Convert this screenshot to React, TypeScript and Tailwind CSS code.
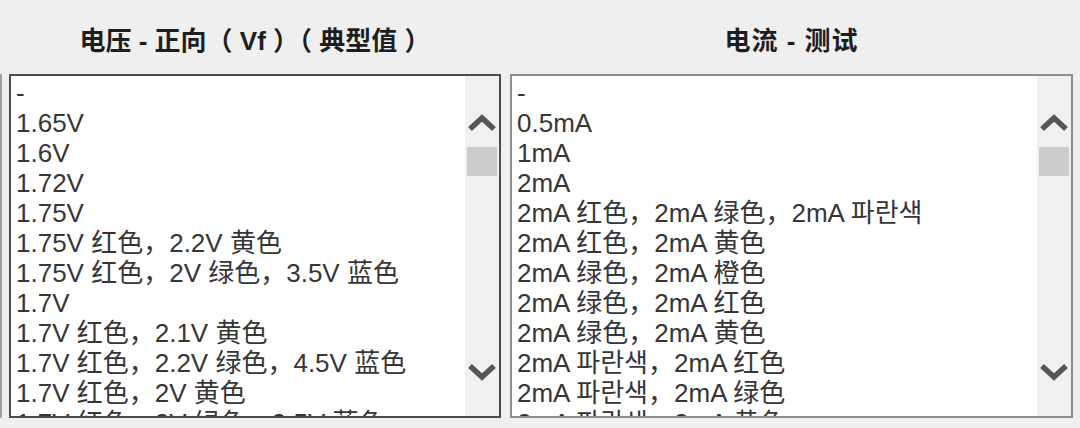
import React from "react";

const leftItems = [
  "-",
  "1.65V",
  "1.6V",
  "1.72V",
  "1.75V",
  "1.75V 红色，2.2V 黄色",
  "1.75V 红色，2V 绿色，3.5V 蓝色",
  "1.7V",
  "1.7V 红色，2.1V 黄色",
  "1.7V 红色，2.2V 绿色，4.5V 蓝色",
  "1.7V 红色，2V 黄色",
  "1.7V 红色，2V 绿色，3.5V 蓝色",
];

const rightItems = [
  "-",
  "0.5mA",
  "1mA",
  "2mA",
  "2mA 红色，2mA 绿色，2mA 파란색",
  "2mA 红色，2mA 黄色",
  "2mA 绿色，2mA 橙色",
  "2mA 绿色，2mA 红色",
  "2mA 绿色，2mA 黄色",
  "2mA 파란색，2mA 红色",
  "2mA 파란색，2mA 绿色",
  "2mA 파란색，2mA 黄色",
];

function Chevron({ up }: { up?: boolean }) {
  return (
    <svg width="30" height="20" viewBox="0 0 30 20">
      <polyline
        points={up ? "3,17 15,6 27,17" : "3,3 15,14 27,3"}
        fill="none"
        stroke="#565656"
        strokeWidth="5.5"
        strokeLinecap="butt"
        strokeLinejoin="miter"
      />
    </svg>
  );
}

function ListBox({ items, dark, width }: { items: string[]; dark?: boolean; width: string }) {
  return (
    <div
      className={`${width} h-[344px] border-2 ${dark ? "border-[#4d4d4d]" : "border-[#8c8c8c]"} bg-white flex overflow-hidden`}
    >
      <div className="flex-1 overflow-hidden pl-[5px] pt-[2px]">
        {items.map((t, i) => (
          <div
            key={i}
            className="h-[30px] leading-[30px] text-[26px] text-[#363636] whitespace-nowrap"
          >
            {t}
          </div>
        ))}
      </div>
      <div className="w-[34px] bg-[#f0f0f0] flex flex-col items-center">
        <div className="h-[71px] flex items-center justify-center pt-[20px]">
          <Chevron up />
        </div>
        <div className="w-[30px] h-[29px] bg-[#cdcdcd]" />
        <div className="flex-1 flex items-end justify-center pb-[33px]">
          <Chevron />
        </div>
      </div>
    </div>
  );
}

export default function App() {
  return (
    <div className="w-[1080px] h-[428px] bg-[#efefef] overflow-hidden font-['Liberation_Sans','Noto_Sans_CJK_SC',sans-serif] flex">
      <div className="pt-[74px] w-[9px] shrink-0">
        <div className="w-[2px] h-[344px] bg-[#a0a0a0]" />
      </div>
      <div className="flex flex-col w-[492px] shrink-0">
        <div className="h-[74px] flex items-center justify-center pt-[8px]">
          <span className="text-[26px] font-bold text-[#1e1e1e] whitespace-pre">电压 - 正向（ Vf ）（ 典型值 ）</span>
        </div>
        <ListBox items={leftItems} dark width="w-[492px]" />
      </div>
      <div className="w-[9px] shrink-0" />
      <div className="flex flex-col w-[563px] shrink-0">
        <div className="h-[74px] flex items-center justify-center pt-[8px]">
          <span className="text-[26px] font-bold text-[#1e1e1e] tracking-[1px]">电流 - 测试</span>
        </div>
        <ListBox items={rightItems} width="w-[563px]" />
      </div>
    </div>
  );
}
